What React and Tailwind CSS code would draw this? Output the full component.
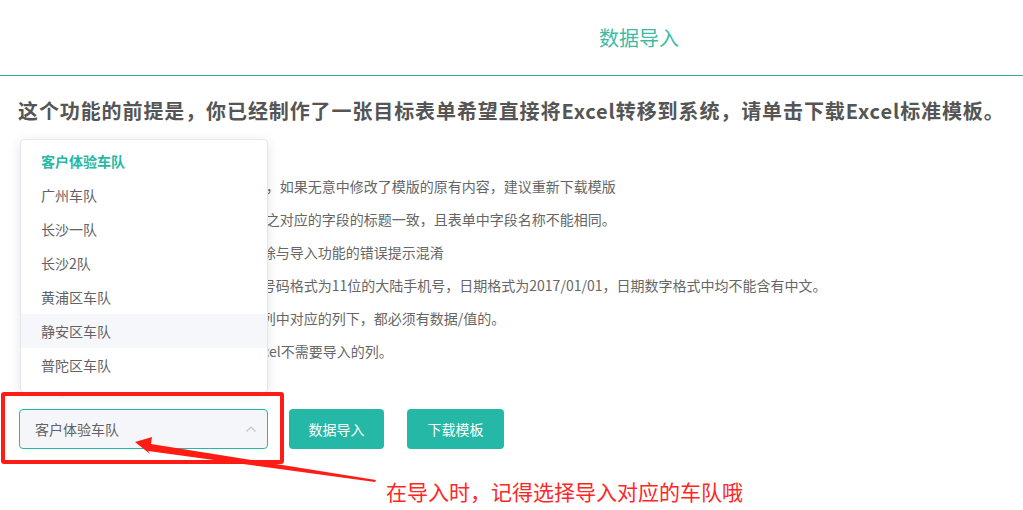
import React from "react";

const teams = [
  "客户体验车队",
  "广州车队",
  "长沙一队",
  "长沙2队",
  "黄浦区车队",
  "静安区车队",
  "普陀区车队",
  "徐汇区车队",
];

// the first part of each rule sits under the open dropdown
const rules = [
  "1.请勿修改模版中表头的名称与顺序等，如果无意中修改了模版的原有内容，建议重新下载模版",
  "2.模版中各表头的名称必须和系统中与之对应的字段的标题一致，且表单中字段名称不能相同。",
  "3导入前请先将模版中全部示例数据删除与导入功能的错误提示混淆",
  "4导入数据时请注意，联系人员的手机号码格式为11位的大陆手机号，日期格式为2017/01/01，日期数字格式中均不能含有中文。",
  "5所有必填字段在模版中的表头所在的列中对应的列下，都必须有数据/值的。",
  "6如有多余的列，导入前请先删除掉Excel不需要导入的列。",
];

function ChevronUp() {
  return (
    <svg width="12" height="12" viewBox="0 0 12 12" fill="none">
      <path d="M1.5 8.5L6 4l4.5 4.5" stroke="#c0c4cc" strokeWidth="1.2" />
    </svg>
  );
}

export default function App() {
  return (
    <div
      className="relative w-[1023px] h-[510px] overflow-hidden bg-white text-[#606266]"
      style={{ fontFamily: '"Noto Sans CJK SC", "Noto Sans", sans-serif' }}
    >
      <header className="h-[76px] border-b border-[#3aaa96] pl-[599px] pt-[24px]">
        <h1 className="text-[20px] leading-[28px] text-[#3dbba4]">数据导入</h1>
      </header>

      <main className="px-[18px]">
        <h2 className="mt-[20px] text-[20px] leading-[30px] font-bold text-[#555] whitespace-nowrap tracking-[0.9px]">
          这个功能的前提是，你已经制作了一张目标表单希望直接将Excel转移到系统，请单击下载Excel标准模板。
        </h2>

        <ul className="mt-[44px] pl-[12px] text-[14px] leading-[33px] text-[#666]">
          {rules.map((r) => (
            <li key={r} className="whitespace-nowrap">
              {r}
            </li>
          ))}
        </ul>

        <div className="mt-[41px] flex items-center">
          <div className="ml-px flex h-[40px] w-[249px] items-center justify-between rounded-[4px] border border-[#26b8a6] bg-[#f5f6fa] pl-[15px] pr-[10px] text-[14px] text-[#606266]">
            <span>客户体验车队</span>
            <ChevronUp />
          </div>
          <button className="ml-[21px] h-[40px] w-[95px] rounded-[4px] bg-[#26b8a6] text-[14px] text-white">
            数据导入
          </button>
          <button className="ml-[23px] h-[40px] w-[97px] rounded-[4px] bg-[#26b8a6] text-[14px] text-white">
            下载模板
          </button>
        </div>
      </main>

      {/* dropdown popper */}
      <div className="absolute left-[20px] top-[139px] w-[248px]">
        <div className="h-[254px] overflow-hidden rounded-[4px] border border-[#e4e7ed] bg-white pt-[4px] pb-[6px] shadow-[0_2px_12px_0_rgba(0,0,0,0.1)]">
          {teams.map((t, i) => (
            <div
              key={t}
              className={
                i === 0
                  ? "h-[34px] pl-[20px] text-[14px] leading-[34px] font-bold text-[#26b8a6]"
                  : i === 5
                  ? "h-[34px] pl-[20px] text-[14px] leading-[34px] bg-[#f5f7fa] text-[#606266]"
                  : "h-[34px] pl-[20px] text-[14px] leading-[34px] text-[#606266]"
              }
            >
              {t}
            </div>
          ))}
        </div>
        <div className="absolute left-[36px] -bottom-[5px] h-0 w-0 border-x-[6px] border-t-[6px] border-x-transparent border-t-[#ebeef5]" />
      </div>

      {/* annotation */}
      <div className="absolute left-[1px] top-[392px] h-[72px] w-[283px] rounded-[3px] border-[4px] border-[#ff1c14]" />
      <svg className="pointer-events-none absolute left-0 top-0" width="1023" height="510">
        <polygon
          points="135,442 152,437 151,444 376,480 375,482 148,451 150,454"
          fill="#ff1c14"
        />
      </svg>
      <p className="absolute left-[386px] top-[478px] text-[21px] leading-[26px] text-[#ff2626] whitespace-nowrap">
        在导入时，记得选择导入对应的车队哦
      </p>
    </div>
  );
}
